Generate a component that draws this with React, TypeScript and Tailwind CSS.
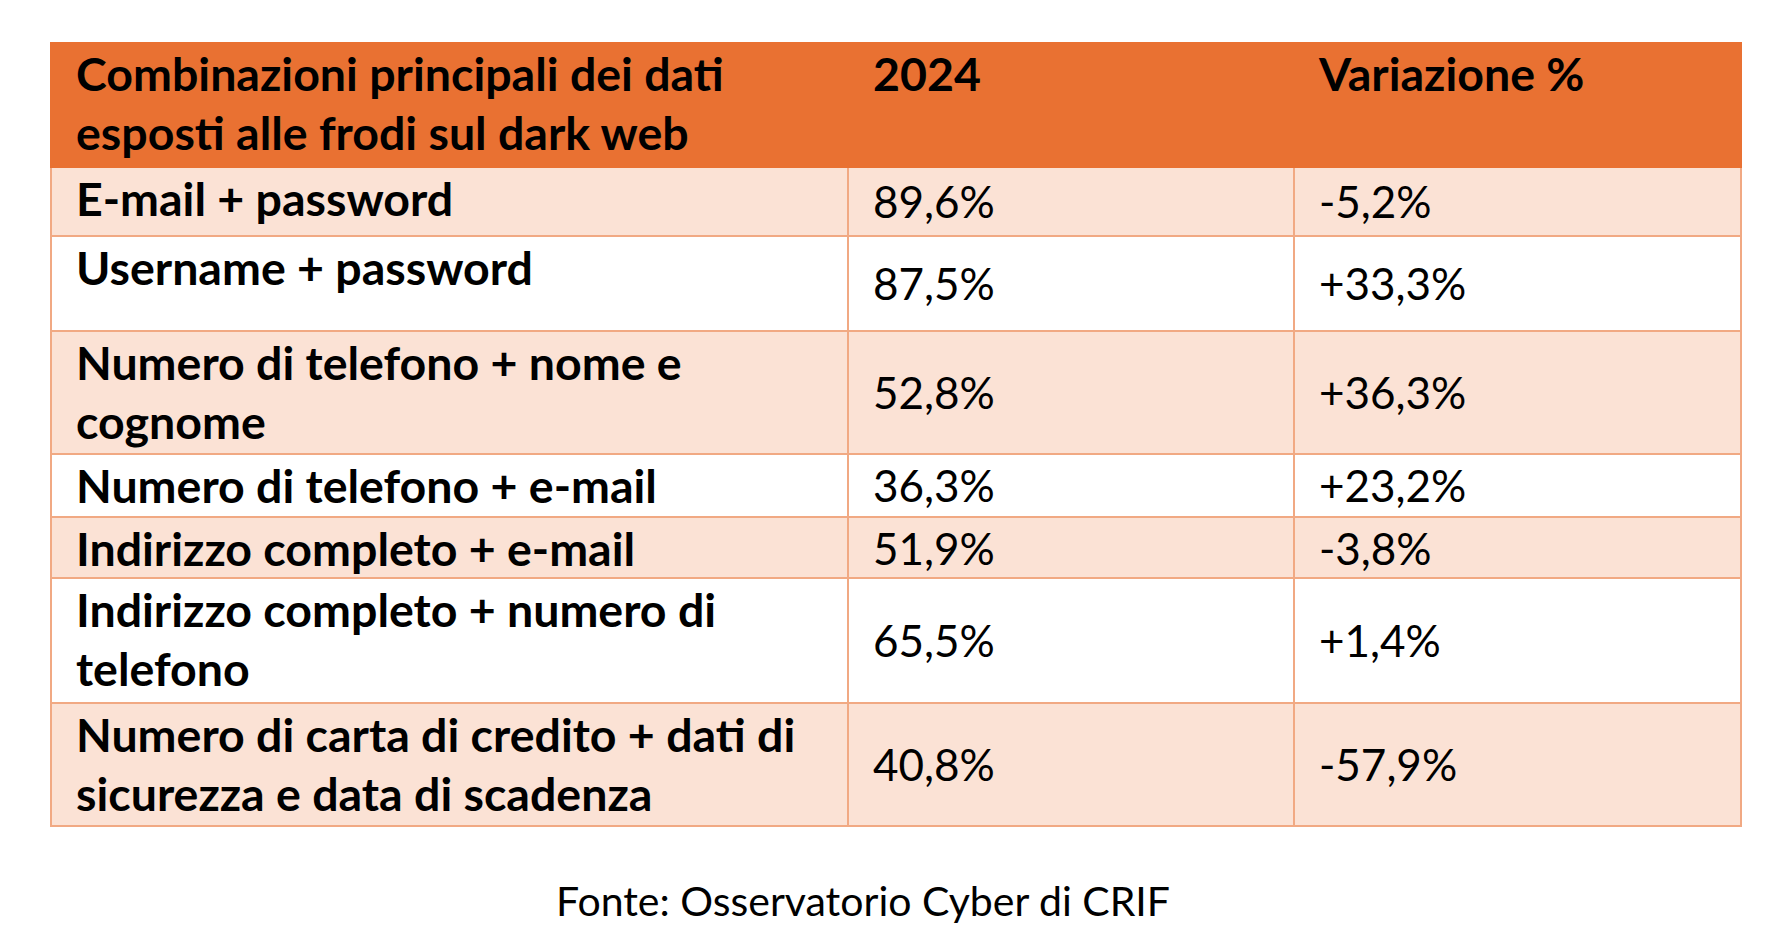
import React from "react"

type Row = {
    label: string[]
    value: string
    change: string
    shaded: boolean
    height: string
}

const rows: Row[] = [
    { label: ["E-mail + password"], value: "89,6%", change: "-5,2%", shaded: true, height: "h-[69px]" },
    { label: ["Username + password"], value: "87,5%", change: "+33,3%", shaded: false, height: "h-[95px]" },
    { label: ["Numero di telefono + nome e", "cognome"], value: "52,8%", change: "+36,3%", shaded: true, height: "h-[123px]" },
    { label: ["Numero di telefono + e-mail"], value: "36,3%", change: "+23,2%", shaded: false, height: "h-[63px]" },
    { label: ["Indirizzo completo + e-mail"], value: "51,9%", change: "-3,8%", shaded: true, height: "h-[61px]" },
    { label: ["Indirizzo completo + numero di", "telefono"], value: "65,5%", change: "+1,4%", shaded: false, height: "h-[125px]" },
    { label: ["Numero di carta di credito + dati di", "sicurezza e data di scadenza"], value: "40,8%", change: "-57,9%", shaded: true, height: "h-[123px]" },
]

function DataRow({ row }: { row: Row }) {
    return (
        <div
            className={`${row.height} ${row.shaded ? "bg-[#fbe2d5]" : "bg-white"} grid grid-cols-[795px_446px_1fr] border-x-2 border-b-2 border-[#f1a983]`}
        >
            <div className="pl-[24px] pt-[1px] font-bold text-[46.5px]">
                {row.label.map(line => (
                    <div key={line} className="whitespace-nowrap">{line}</div>
                ))}
            </div>
            <div className="border-l-2 border-[#f1a983] pl-[24px] flex items-center">{row.value}</div>
            <div className="border-l-2 border-[#f1a983] pl-[24px] flex items-center">{row.change}</div>
        </div>
    )
}

export default function App() {
    return (
        <div className="bg-white min-h-screen w-[1788px] h-[944px] text-black [font-family:Lato,sans-serif] text-[44px] leading-[59px]">
            <div className="pt-[42px] pl-[50px]">
                <div className="w-[1692px]">
                    <div className="h-[126px] bg-[#e97132] grid grid-cols-[797px_446px_1fr] font-bold text-[46.5px] pt-[2px]">
                        <div className="pl-[26px]">
                            <div>Combinazioni principali dei dati</div>
                            <div>esposti alle frodi sul dark web</div>
                        </div>
                        <div className="pl-[26px]">2024</div>
                        <div className="pl-[26px]">Variazione %</div>
                    </div>
                    {rows.map(row => (
                        <DataRow key={row.value} row={row} />
                    ))}
                </div>
            </div>
            <div className="pl-[556px] pt-[44px] text-[41px]">Fonte: Osservatorio Cyber di CRIF</div>
        </div>
    )
}
